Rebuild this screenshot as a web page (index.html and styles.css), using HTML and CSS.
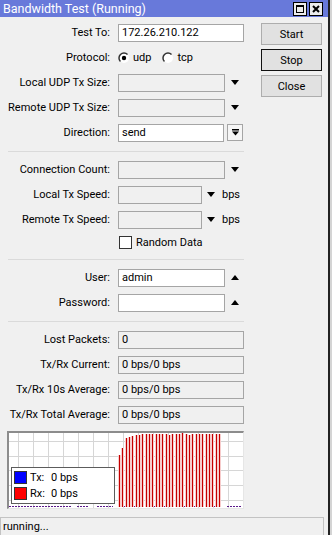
FILE: index.html
```html
<!DOCTYPE html>
<html lang="en">
    <head>
        <meta charset="UTF-8" />
        <meta name="viewport" content="width=device-width, initial-scale=1.0" />
        <title>Bandwidth Test (Running)</title>
        <link rel="stylesheet" href="styles.css">
    </head>
    <body>
        <div class="window">
            <!--Title Bar-->
            <div class="titlebar">
                <span class="title">Bandwidth Test (Running)</span>
                <div class="win-buttons">
                    <span class="win-btn">
                        <svg width="8" height="8" viewBox="0 0 8 8"><rect x="0.5" y="0.5" width="7" height="7" fill="none" stroke="#000"/><line x1="0" y1="1.5" x2="8" y2="1.5" stroke="#000"/></svg>
                    </span>
                    <span class="win-btn">
                        <svg width="8" height="8" viewBox="0 0 8 8"><path d="M1 1 L7 7 M7 1 L1 7" stroke="#000" stroke-width="2"/></svg>
                    </span>
                </div>
            </div>

            <div class="body">
                <div class="top">
                    <div class="form">
                        <div class="row">
                            <label>Test To:</label>
                            <div class="field"><span class="input white full">172.26.210.122</span></div>
                        </div>
                        <div class="row">
                            <label>Protocol:</label>
                            <div class="field">
                                <span class="option">
                                    <svg class="radio" width="12" height="12" viewBox="0 0 12 12"><circle cx="6" cy="6" r="5" fill="#fff"/><path d="M9.54 2.46 A5 5 0 0 0 2.46 9.54" fill="none" stroke="#333" stroke-width="1.5"/><circle cx="6" cy="6" r="2.2" fill="#000"/></svg>
                                    udp
                                </span>
                                <span class="option">
                                    <svg class="radio" width="12" height="12" viewBox="0 0 12 12"><circle cx="6" cy="6" r="5" fill="#fff"/><path d="M9.54 2.46 A5 5 0 0 0 2.46 9.54" fill="none" stroke="#333" stroke-width="1.5"/></svg>
                                    tcp
                                </span>
                            </div>
                        </div>
                        <div class="row">
                            <label>Local UDP Tx Size:</label>
                            <div class="field"><span class="input"></span><span class="arrow-down"></span></div>
                        </div>
                        <div class="row">
                            <label>Remote UDP Tx Size:</label>
                            <div class="field"><span class="input"></span><span class="arrow-down"></span></div>
                        </div>
                        <div class="row">
                            <label>Direction:</label>
                            <div class="field">
                                <span class="input white dir">send</span>
                                <span class="combo-btn">
                                    <svg width="7" height="7" viewBox="0 0 7 7"><rect x="0" y="0" width="7" height="1.5" fill="#000"/><polygon points="0,2.5 7,2.5 3.5,6.5" fill="#000"/></svg>
                                </span>
                            </div>
                        </div>

                        <div class="sep"></div>

                        <div class="row">
                            <label>Connection Count:</label>
                            <div class="field"><span class="input"></span><span class="arrow-down"></span></div>
                        </div>
                        <div class="row">
                            <label>Local Tx Speed:</label>
                            <div class="field"><span class="input short"></span><span class="arrow-down tight"></span><span class="unit">bps</span></div>
                        </div>
                        <div class="row">
                            <label>Remote Tx Speed:</label>
                            <div class="field"><span class="input short"></span><span class="arrow-down tight"></span><span class="unit">bps</span></div>
                        </div>
                        <div class="row check-row">
                            <label></label>
                            <div class="field"><span class="checkbox"></span>Random Data</div>
                        </div>

                        <div class="sep"></div>

                        <div class="row">
                            <label>User:</label>
                            <div class="field"><span class="input white">admin</span><span class="arrow-up"></span></div>
                        </div>
                        <div class="row">
                            <label>Password:</label>
                            <div class="field"><span class="input white"></span><span class="arrow-up"></span></div>
                        </div>

                        <div class="sep"></div>

                        <div class="row">
                            <label>Lost Packets:</label>
                            <div class="field"><span class="input full">0</span></div>
                        </div>
                        <div class="row">
                            <label>Tx/Rx Current:</label>
                            <div class="field"><span class="input full">0 bps/0 bps</span></div>
                        </div>
                        <div class="row">
                            <label>Tx/Rx 10s Average:</label>
                            <div class="field"><span class="input full">0 bps/0 bps</span></div>
                        </div>
                        <div class="row">
                            <label>Tx/Rx Total Average:</label>
                            <div class="field"><span class="input full">0 bps/0 bps</span></div>
                        </div>
                    </div>

                    <div class="actions">
                        <button class="btn">Start</button>
                        <button class="btn focused">Stop</button>
                        <button class="btn">Close</button>
                    </div>
                </div>

                <!--Traffic Graph-->
                <div class="graph">
                    <svg id="graph-svg" width="234" height="75" viewBox="0 0 234 75"></svg>
                    <div class="legend">
                        <div class="legend-row"><span class="swatch tx"></span><span class="legend-name">Tx:</span>0 bps</div>
                        <div class="legend-row"><span class="swatch rx"></span><span class="legend-name">Rx:</span>0 bps</div>
                    </div>
                </div>
            </div>

            <div class="status">running...</div>
        </div>
        <script>
            //Graph Script
            const svg = document.querySelector("#graph-svg");
            const ns = "http://www.w3.org/2000/svg";

            function addLine(x1, y1, x2, y2, color, width, dash) {
                const line = document.createElementNS(ns, "line");
                line.setAttribute("x1", x1);
                line.setAttribute("y1", y1);
                line.setAttribute("x2", x2);
                line.setAttribute("y2", y2);
                line.setAttribute("stroke", color);
                line.setAttribute("stroke-width", width);
                if (dash) line.setAttribute("stroke-dasharray", dash);
                svg.appendChild(line);
            }

            // grid
            for (let x = 9; x < 234; x += 15) addLine(x + 0.5, 0, x + 0.5, 75, "#d6d6d6", 1);
            [8, 23, 37, 52, 67].forEach(y => addLine(0, y + 0.5, 234, y + 0.5, "#d6d6d6", 1));

            // baseline
            [[0, 63], [68, 80], [88, 104], [109, 210], [218, 233]].forEach(seg => {
                addLine(seg[0], 73.5, seg[1], 73.5, "#5a1a8a", 1, "2 1");
            });

            // rx bars
            const tops = [22, 15, 5, 4, 3, 2, 2, 1, 1, 1, 1, 1, 1, 1, 1, 2, 1, 1, 1, 0, 1, 2, 1, 1, 1, 1, 1, 1, 1, 1, 1];
            tops.forEach((top, i) => {
                const x = Math.round(110 + i * 3.33) + 0.5;
                addLine(x, top, x, 74, "#f7cccc", 3);
                addLine(x, top, x, 74, "#c40000", 1);
            });
        </script>
    </body>
</html>
```

FILE: styles.css
```css
/* Window CSS */
:root {
    --face: #f0f0f0;
    --edge: #a5a5a5;
    --title: #6879da;
}
html, body {
    margin: 0;
    height: 100%;
}
body {
    background-color: #d4d4d4;
    font-family: Roboto, "Liberation Sans", sans-serif;
    font-size: 11px;
    color: #000;
}
.window {
    width: 328px;
    height: 535px;
    background-color: var(--face);
    border-right: 2px solid #222;
    display: flex;
    flex-direction: column;
}
.titlebar {
    height: 17px;
    flex: 0 0 17px;
    background-color: var(--title);
    color: #fff;
    display: flex;
    align-items: center;
    justify-content: space-between;
    padding: 0 5px 0 3px;
}
.title {
    font-size: 12.5px;
}
.win-buttons {
    display: flex;
    gap: 2px;
}
.win-btn {
    width: 14px;
    height: 14px;
    box-sizing: border-box;
    border: 1px solid #000;
    background-color: #ececec;
    display: flex;
    align-items: center;
    justify-content: center;
}
.body {
    flex: 1;
    padding-top: 3px;
}
.top {
    display: flex;
}
.form {
    width: 244px;
}
.row {
    height: 25px;
    display: grid;
    grid-template-columns: 110px 126px;
    column-gap: 8px;
    align-items: center;
}
.check-row {
    height: 21px;
}
.row label {
    text-align: right;
    white-space: nowrap;
}
.field {
    display: flex;
    align-items: center;
}
.input {
    box-sizing: border-box;
    width: 107px;
    height: 18px;
    line-height: 16px;
    padding: 0 3px;
    border: 1px solid var(--edge);
    background-color: var(--face);
    white-space: nowrap;
}
.input.white {
    background-color: #fff;
}
.input.full {
    width: 126px;
}
.input.short {
    width: 84px;
}
.input.dir {
    width: 106px;
}
.arrow-down,
.arrow-up {
    width: 0;
    height: 0;
    margin-left: 6px;
    border-left: 4.5px solid transparent;
    border-right: 4.5px solid transparent;
}
.arrow-down {
    border-top: 5px solid #000;
}
.arrow-up {
    border-bottom: 5px solid #000;
}
.arrow-down.tight {
    margin-left: 5px;
}
.unit {
    margin-left: 7px;
}
.combo-btn {
    box-sizing: border-box;
    width: 16px;
    height: 17px;
    margin-left: 3px;
    border: 1px solid var(--edge);
    background-color: #f6f6f6;
    display: flex;
    align-items: center;
    justify-content: center;
}
.option {
    display: inline-flex;
    align-items: center;
    gap: 3px;
    margin-right: 11px;
}
.checkbox {
    box-sizing: border-box;
    width: 13px;
    height: 13px;
    margin: 0 4px 0 1px;
    border: 1px solid #333;
    background-color: #fff;
}
.sep {
    height: 1px;
    background-color: #dadada;
    margin: 6px 0 5px 8px;
}
.actions {
    margin-left: 17px;
    padding-top: 3px;
    display: flex;
    flex-direction: column;
    gap: 4px;
}
.btn {
    width: 61px;
    height: 22px;
    padding: 0;
    font: inherit;
    color: #000;
    background-color: #e1e1e1;
    border: 1px solid #adadad;
}
.btn.focused {
    border-color: #111;
}
/* Graph */
.graph {
    position: relative;
    box-sizing: border-box;
    width: 237px;
    height: 78px;
    margin: 4px 0 0 7px;
    background-color: #fff;
    border-style: solid;
    border-width: 2px 1px 1px 2px;
    border-color: #8c8c8c #e6e6e6 #e6e6e6 #8c8c8c;
}
#graph-svg {
    display: block;
}
.legend {
    position: absolute;
    left: 2px;
    top: 34px;
    box-sizing: border-box;
    width: 104px;
    height: 37px;
    padding: 3px 2px;
    background-color: #fff;
    border: 1px solid #5c5c5c;
    display: flex;
    flex-direction: column;
    gap: 3px;
}
.legend-row {
    display: flex;
    align-items: center;
    height: 13px;
}
.swatch {
    box-sizing: border-box;
    width: 13px;
    height: 13px;
    margin-right: 3px;
    border: 1px solid #333;
}
.swatch.tx {
    background-color: #0000ff;
}
.swatch.rx {
    background-color: #ff0000;
}
.legend-name {
    width: 21px;
}
/* Status Bar */
.status {
    box-sizing: border-box;
    width: 324px;
    height: 18px;
    flex: 0 0 18px;
    padding-left: 2px;
    line-height: 17px;
    border: 1px solid #c3c3c3;
    border-bottom: none;
}
```
